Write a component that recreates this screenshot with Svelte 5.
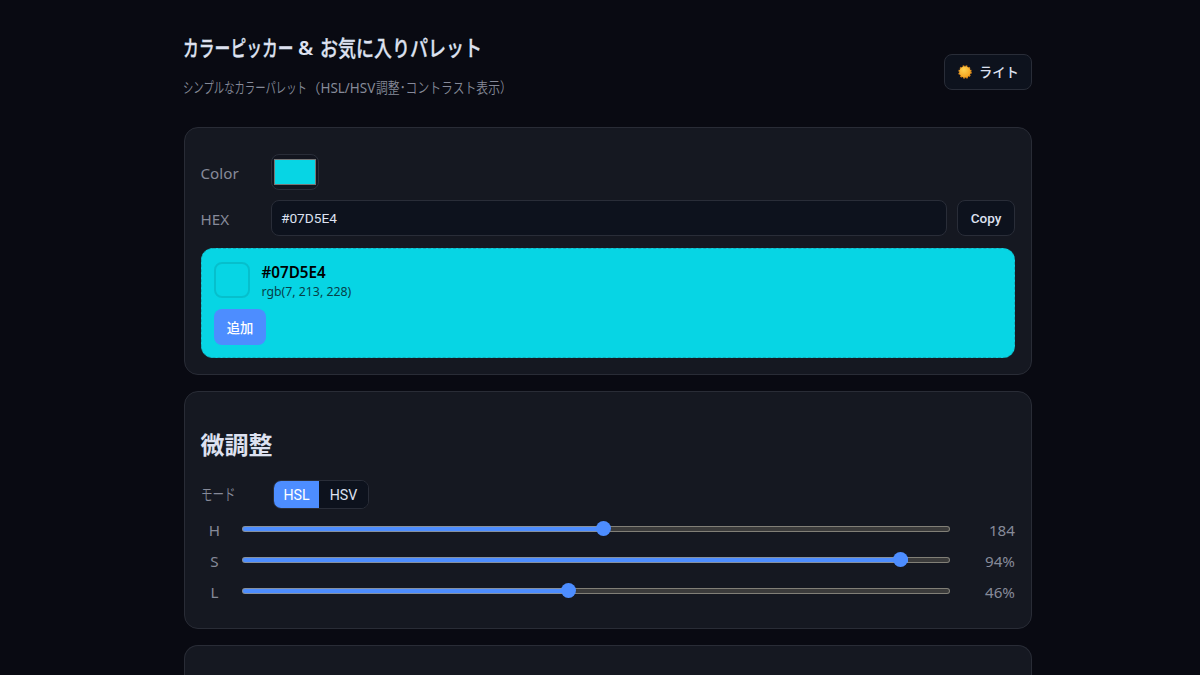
<script>
  let color = $state('#07d5e4');
  let mode = $state('HSL');
  let channels = $state([
    { name: 'H', value: 184, max: 360, unit: '' },
    { name: 'S', value: 94, max: 100, unit: '%' },
    { name: 'L', value: 46, max: 100, unit: '%' }
  ]);
</script>

<main>
  <header>
    <div>
      <h1><span class="t1">カラーピッカー</span><span class="amp">&amp;</span><span class="t2">お気に入りパレット</span></h1>
      <p><span class="s1">シンプルなカラーパレット</span><span class="s2">（HSL/HSV</span><span class="s3">調整･コントラスト表示）</span></p>
    </div>
    <button class="theme">
      <svg width="14" height="14" viewBox="0 0 14 14">
        <defs>
          <radialGradient id="sun" cx=".4" cy=".3" r=".7">
            <stop offset="0" stop-color="#ffd251" /><stop offset="1" stop-color="#f5a11c" />
          </radialGradient>
        </defs>
        <circle cx="7" cy="7" r="6" fill="none" stroke="#e98a16" stroke-width="1.4" stroke-dasharray="1.7 1.44" />
        <circle cx="7" cy="7" r="5.8" fill="url(#sun)" />
      </svg>
      <span>ライト</span>
    </button>
  </header>

  <section class="card picker">
    <div class="row">
      <span class="label">Color</span>
      <input type="color" bind:value={color} />
    </div>
    <div class="row hexrow">
      <span class="label">HEX</span>
      <input class="hex" type="text" value="#07D5E4" />
      <button class="copy">Copy</button>
    </div>
    <div class="preview" style="background-color: {color}">
      <div class="info">
        <span class="swatch"></span>
        <div>
          <strong>#07D5E4</strong>
          <small>rgb(7, 213, 228)</small>
        </div>
      </div>
      <button class="add">追加</button>
    </div>
  </section>

  <section class="card tune">
    <h2>微調整</h2>
    <div class="moderow">
      <span class="label"><span class="mode">モード</span></span>
      <div class="seg">
        {#each ['HSL', 'HSV'] as m}
          <button class:active={mode === m} onclick={() => (mode = m)}>{m}</button>
        {/each}
      </div>
    </div>
    {#each channels as c}
      <div class="channel">
        <span class="name">{c.name}</span>
        <input type="range" min="0" max={c.max} bind:value={c.value} style="--fill: {(c.value / c.max) * 100}%" />
        <span class="value">{c.value}{c.unit}</span>
      </div>
    {/each}
  </section>

  <section class="card next"></section>
</main>

<style>
  :global(body) {
    background: #090a12;
    height: 675px;
    overflow: hidden;
    color-scheme: dark;
  }
  * { box-sizing: border-box; }
  main {
    margin: 0 168px 0 184px;
    color: #dde1f0;
    font: 15.2px/22px "Noto Sans", "Noto Sans CJK JP", sans-serif;
  }
  header {
    height: 127px;
    display: flex;
    justify-content: space-between;
    align-items: flex-start;
  }
  h1, p { margin: 0 0 0 -1px; white-space: nowrap; display: flex; }
  h1 {
    padding-top: 32px;
    font: 600 20.5px/30px "Noto Sans", "Noto Sans CJK JP", sans-serif;
  }
  h1 span, p span { display: block; transform-origin: left center; }
  .t1, .t2 { font-family: "Noto Sans CJK JP", sans-serif; font-size: 22px; font-weight: 500; line-height: 28px; height: 30px; -webkit-text-stroke: .3px #dde1f0; }
  .t1 { width: 115px; transform: scaleX(.718); }
  .amp { width: 22px; }
  .t2 { width: 161px; transform: scaleX(.818); }
  p {
    margin-top: 15px;
    color: #868a99;
    font: 14px/22px "Noto Sans", "Noto Sans CJK JP", sans-serif;
  }
  .s1 { width: 124px; transform: scale(.74, 1.06); font-weight: 350; }
  .s2 { width: 69px; transform: scaleX(.96); }
  .s3 { width: 115px; transform: scale(.845, 1.04); font-weight: 350; }
  button {
    margin: 0;
    height: 36px;
    border: 1px solid #292d38;
    border-radius: 8px;
    background: #0d121d;
    color: #dde1f0;
    font: 500 13.3px/18px Roboto, "Noto Sans CJK JP", sans-serif;
  }
  .theme {
    width: 88px;
    margin-top: 54px;
    padding: 0 13px;
    display: flex;
    align-items: center;
    gap: 7px;
  }
  .theme svg { flex: none; }
  .theme span { white-space: nowrap; padding-top: 1px; }
  .card {
    border: 1px solid #292c36;
    border-radius: 14px;
    background: #151821;
    padding: 0 16px;
    margin-bottom: 16px;
  }
  .picker { height: 248px; padding-top: 26px; }
  .row { display: flex; align-items: center; height: 36px; margin-bottom: 10px; }
  .label { width: 70.5px; margin-left: -.5px; flex: none; color: #868a99; padding-top: 2px; }
  input[type='color'] {
    width: 48px;
    height: 36px;
    padding: 0;
    margin: 0;
    border: 1px solid #292d38;
    border-radius: 8px;
    background: #12151f;
  }
  .hexrow { margin-bottom: 12px; }
  .hex {
    flex: 1;
    min-width: 0;
    height: 36px;
    padding: 0 9px;
    border: 1px solid #292d38;
    border-radius: 8px;
    background: #0d121d;
    color: #dde1f0;
    font: 13.7px Roboto, sans-serif;
  }
  .copy { width: 58px; margin-left: 10px; padding: 0; font-size: 13.5px; }
  .preview {
    height: 110px;
    border: 1px dashed #12aebb;
    border-radius: 12px;
    padding: 13px 12px;
  }
  .info { display: flex; gap: 12px; height: 47px; }
  .info div { margin-left: -.5px; }
  .swatch { width: 36px; height: 36px; border: 2px solid rgba(0, 0, 0, .1); border-radius: 8px; }
  strong { display: block; color: #000; font: 600 15.2px/20px "Noto Sans", sans-serif; }
  small { display: block; color: #063f48; font: 12.3px/19px "Noto Sans", sans-serif; }
  .add { width: 52px; padding: 3px 0 0; border: 0; background: #4d8dff; color: #fff; }
  .tune { height: 238px; }
  h2 { margin: 0 0 0 -.5px; padding-top: 34px; font: 700 24px/36px "Noto Sans CJK JP", sans-serif; }
  .moderow { display: flex; height: 29px; margin: 18px 0 5px; align-items: center; }
  .moderow .label { padding: 0 0 2px; }
  .mode { display: inline-block; transform: scale(.76, 1.06); transform-origin: left; font-weight: 350; }
  .seg {
    display: flex;
    width: 96px;
    height: 29px;
    margin-left: 2px;
    border: 1px solid #292d38;
    border-radius: 8px;
    overflow: hidden;
    background: #0d121d;
  }
  .seg button { height: 27px; width: 49px; padding: 0; border: 0; border-radius: 0; font-size: 14.2px; font-weight: 400; }
  .seg .active { width: 45px; background: #4d8dff; color: #fff; }
  .channel { display: grid; grid-template-columns: 27px 708px 1fr; column-gap: 14px; height: 31px; align-items: center; color: #868a99; }
  .name { text-align: center; padding-top: 1px; }
  input[type='range'] {
    appearance: none;
    width: 708px;
    height: 16px;
    margin: 0 0 2px;
    background: none;
  }
  input[type='range']::-webkit-slider-runnable-track {
    height: 6px;
    border: 1px solid rgba(148, 145, 135, .8);
    border-radius: 3px;
    background: linear-gradient(to right, #4d8dff var(--fill), #3b3b3b var(--fill));
    background-origin: border-box;
  }
  input[type='range']::-webkit-slider-thumb {
    appearance: none;
    width: 15px;
    height: 15px;
    margin-top: -5.5px;
    border-radius: 50%;
    background: #4d8dff;
  }
  .value { text-align: right; padding-top: 1px; }
  .next { height: 30px; margin: 0; border-bottom: 0; border-radius: 14px 14px 0 0; }
</style>
